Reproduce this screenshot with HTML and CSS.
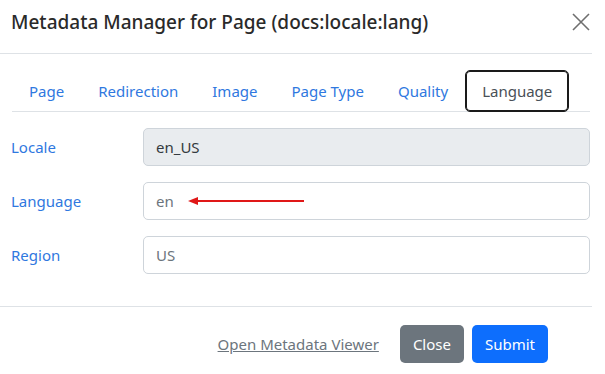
FILE: index.html
```html
<!DOCTYPE html>
<html>
<head>
    <title>Metadata Manager</title>
    <link rel="stylesheet" href="styles.css">
</head>
<body>
    <div class="modal">
        <div class="modal-header">
            <h1 class="modal-title">Metadata Manager for Page (docs:locale:lang)</h1>
            <button class="btn-close" type="button" aria-label="Close">
                <svg width="18" height="18" viewBox="0 0 18 18">
                    <path d="M1 1 L17 17 M17 1 L1 17" stroke="#6f6f6f" stroke-width="1.6" fill="none"/>
                </svg>
            </button>
        </div>

        <div class="modal-body">
            <ul class="nav-tabs">
                <li><a class="nav-link" href="#">Page</a></li>
                <li><a class="nav-link" href="#">Redirection</a></li>
                <li><a class="nav-link" href="#">Image</a></li>
                <li><a class="nav-link" href="#">Page Type</a></li>
                <li><a class="nav-link" href="#">Quality</a></li>
                <li><a class="nav-link active" href="#">Language</a></li>
            </ul>

            <div class="tab-content">
                <div class="form-row">
                    <label for="locale">Locale</label>
                    <input id="locale" class="form-control readonly" type="text" value="en_US" readonly>
                </div>
                <div class="form-row">
                    <label for="lang">Language</label>
                    <div class="field">
                        <input id="lang" class="form-control" type="text" value="en">
                        <svg class="arrow" width="120" height="10" viewBox="0 0 120 10">
                            <path d="M10 5 H117" stroke="#e01818" stroke-width="2"/>
                            <path d="M1 5 L11 1 L11 9 Z" fill="#e01818"/>
                        </svg>
                    </div>
                </div>
                <div class="form-row">
                    <label for="region">Region</label>
                    <input id="region" class="form-control" type="text" value="US">
                </div>
            </div>
        </div>

        <div class="modal-footer">
            <a class="viewer-link" href="#">Open Metadata Viewer</a>
            <button class="btn btn-secondary" type="button">Close</button>
            <button class="btn btn-primary" type="button">Submit</button>
        </div>
    </div>
</body>
</html>
```

FILE: styles.css
```css
body {
    margin: 0;
    background-color: #ffffff;
    color: #212529;
    font-family: "Noto Sans", "Open Sans", Arial, sans-serif;
    font-size: 15px;
}

.modal {
    width: 592px;
}

.modal-header {
    display: flex;
    justify-content: space-between;
    align-items: flex-start;
    padding: 7px 2px 16px 11px;
    border-bottom: 1px solid #dee2e6;
}
.modal-title {
    margin: 0;
    font-size: 19px;
    font-weight: 500;
    line-height: 30px;
    color: #2a2a2a;
}
.btn-close {
    background: none;
    border: none;
    padding: 0;
    margin-top: 6px;
    width: 18px;
    height: 18px;
    cursor: pointer;
}

.modal-body {
    padding: 16px 2px 16px 12px;
}

.nav-tabs {
    display: flex;
    list-style: none;
    margin: 0;
    padding: 0;
    border-bottom: 1px solid #dee2e6;
}
.nav-link {
    display: block;
    padding: 8px 16px;
    line-height: 24px;
    color: #2f78e0;
    text-decoration: none;
    border: 1px solid transparent;
    border-radius: 5px;
    margin-bottom: -1px;
}
.nav-link.active {
    color: #495057;
    border-color: #1a1a1a;
    box-shadow: inset 0 0 0 1px #1a1a1a;
}

.tab-content {
    padding-top: 16px;
}
.form-row {
    display: grid;
    grid-template-columns: 131px 1fr;
    align-items: center;
    margin-bottom: 16px;
}
.form-row label {
    color: #2f78e0;
    margin-left: -1px;
}
.field {
    position: relative;
}
.form-control {
    box-sizing: border-box;
    width: 100%;
    height: 38px;
    padding: 6px 12px;
    font: inherit;
    color: #6c757d;
    border: 1px solid #ced4da;
    border-radius: 5px;
    background-color: #ffffff;
}
.form-control.readonly {
    background-color: #e9ecef;
    color: #343a40;
}
.arrow {
    position: absolute;
    left: 44px;
    top: 14px;
}

.modal-footer {
    display: flex;
    justify-content: flex-end;
    align-items: center;
    gap: 8px;
    padding: 18px 44px 12px 12px;
    border-top: 1px solid #dee2e6;
}
.viewer-link {
    color: #6c757d;
    margin-right: 13px;
}
.btn {
    font: inherit;
    line-height: 24px;
    padding: 6px 12px;
    border: 1px solid transparent;
    border-radius: 5px;
    color: #ffffff;
    cursor: pointer;
}
.btn-secondary {
    background-color: #6c757d;
}
.btn-primary {
    background-color: #0d6efd;
}
```
